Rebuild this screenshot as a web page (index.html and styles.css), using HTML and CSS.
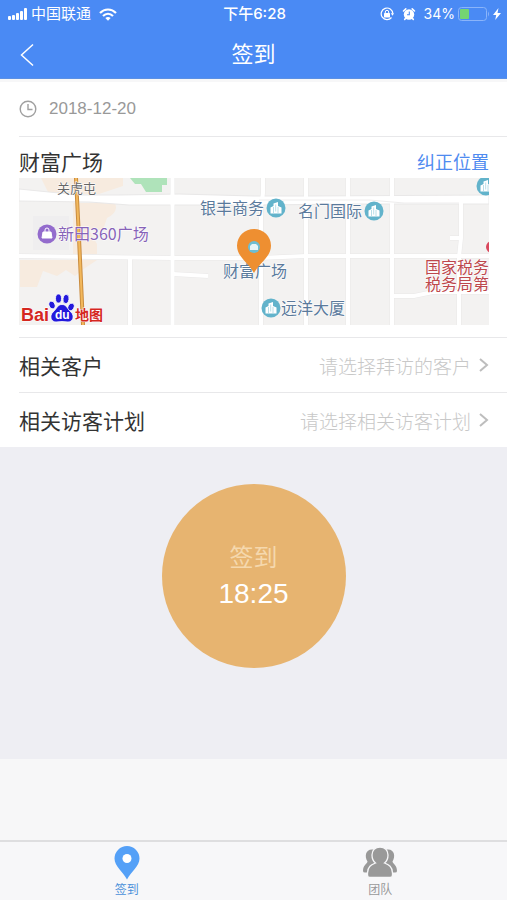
FILE: index.html
```html
<!doctype html>
<html lang="zh-CN">
  <head>
    <meta charset="UTF-8" />
    <meta name="viewport" content="width=device-width, initial-scale=1.0" />
    <title>签到</title>
    <link rel="stylesheet" href="styles.css">
  </head>
  <body>
    <header class="header">
      <div class="status-bar">
        <div class="status-left">
          <svg width="20" height="12" viewBox="0 0 20 12" fill="#fff">
            <rect x="0" y="8" width="3" height="4" rx="1" />
            <rect x="4" y="7" width="3" height="5" rx="1" />
            <rect x="8" y="5" width="3" height="7" rx="1" />
            <rect x="12" y="3" width="3" height="9" rx="1" />
            <rect x="16" y="0" width="3" height="12" rx="1" />
          </svg>
          <span>中国联通</span>
          <svg class="wifi" width="18" height="13" viewBox="0 0 18 13" fill="none" stroke="#fff" stroke-width="2.2">
            <path d="M1 5C5.500 .3 12.500 .3 17 5" />
            <path d="M4 8C7 5 11 5 14 8" />
            <path d="M6.300 10Q9 7.800 11.700 10L9 12.800Z" fill="#fff" stroke="none" />
          </svg>
        </div>
        <div class="status-time">下午6:28</div>
        <div class="status-right">
          <svg width="14" height="14" viewBox="0 0 14 14" fill="none" stroke="#fff">
            <path d="M11.500 10.500A5.800 5.800 0 1 1 12.800 6.500" stroke-width="1.200" />
            <path d="M10.800 6.300h3.200l-1.500 2.400z" fill="#fff" stroke="none" />
            <rect x="4" y="6" width="6" height="4.500" rx=".6" fill="#fff" stroke="none" />
            <path d="M5.300 6.500V5a1.700 1.700 0 0 1 3.400 0v1.500" />
          </svg>
          <svg class="alarm" width="14" height="14" viewBox="0 0 14 14">
            <circle cx="7" cy="7.500" r="5.200" fill="#fff" />
            <path d="M1.500 4 3.800 1.800M12.500 4 10.200 1.800M3.500 11.500l-.8.9M10.500 11.500l.8.9" stroke="#fff" stroke-width="1.600" stroke-linecap="round" />
            <path d="M7.300 4.500v3.300H5" fill="none" stroke="#4a8af4" stroke-width="1.100" />
          </svg>
          <span class="percent">34%</span>
          <svg width="32" height="14" viewBox="0 0 32 14">
            <rect x=".5" y=".5" width="28" height="13" rx="3" fill="none" stroke="#8ab4fa" />
            <rect x="2" y="2" width="9" height="10" rx="1" fill="#74d572" />
            <path d="M30 4.500q2 2.500 0 5z" fill="#8ab4fa" />
          </svg>
          <svg width="8" height="12" viewBox="0 0 8 12" fill="#fff">
            <path d="M5.500 0 0 7h3.200L2.200 12 8 5H4.500z" />
          </svg>
        </div>
      </div>
      <nav class="nav-bar">
        <button class="back" type="button" aria-label="返回">
          <svg width="14" height="24" viewBox="0 0 14 24" fill="none" stroke="#fff" stroke-width="1.500">
            <path d="M13 1.500 1.500 12 13 22.500" />
          </svg>
        </button>
        <h1>签到</h1>
      </nav>
    </header>

    <main class="content">
      <section class="card">
        <div class="row date-row">
          <svg width="18" height="18" viewBox="0 0 18 18" fill="none" stroke="#a0a0a0" stroke-width="1.400">
            <circle cx="9" cy="9" r="7.800" />
            <path d="M9 4v5.500h4.500" />
          </svg>
          <time datetime="2018-12-20">2018-12-20</time>
        </div>

        <div class="place">
          <div class="place-head">
            <h2>财富广场</h2>
            <a class="fix-link" href="#">纠正位置</a>
          </div>
          <svg class="map" viewBox="0 0 470 147">
            <defs>
              <g id="building">
                <circle r="9.500" fill="#62b3cb" />
                <path d="M-5.500 5.500V-.5L-2.500-2V-4.500L2-6V-2L5.500-.5V5.500Z" fill="#fff" />
                <path d="M-2.500-1v6M2-1v6M-.3-3.500v7" stroke="#a5d5e2" stroke-width=".8" />
              </g>
              <g id="roads" fill="none">
                <path d="M153.500 0V147M111 80V147M287 0V147M329 0V147M373 0V147" />
                <path d="M244 0V15L242 30V147" />
                <path d="M442 25V60L440 79V147M431 60H442" />
                <path d="M0 78 153 80H240L287 78H470M154 96 189 98" />
                <path d="M374 118H395L414 114H470" />
              </g>
            </defs>
            <rect width="470" height="147" fill="#f3f2f1" />
            <g fill="#f7ebdf">
              <path d="M22 0H104V8L80 16H30Z" />
              <path d="M54 25H96Q100 34 88 40L84 52H70L78 66V76H54Z" />
              <path d="M1 82H78L66 90 56 98 47 92 38 98 24 93 18 109H1Z" />
            </g>
            <path d="M14 38H50V72H14Z" fill="#efeeef" />
            <path d="M111 0H148V7H143V14H127L122 6H116Z" fill="#afe3ba" />
            <use href="#roads" stroke="#e9e8e8" stroke-width="5" />
            <path d="M0 11 60 17 100 17 160 16 235 18H290L470 17V26H330L240 27 110 27 70 24 0 23Z" fill="#fff" stroke="#e9e8e8" />
            <use href="#roads" stroke="#fff" stroke-width="4" />
            <path d="M240 22H350L385 25H440" fill="none" stroke="#eeeded" />
            <path d="M57 0 60 60 64 147" fill="none" stroke="#c98b3d" stroke-width="4" />
            <path d="M57 0 60 60 64 147" fill="none" stroke="#f2b85c" stroke-width="2" />

            <text class="map-area" x="38" y="15">关虎屯</text>
            <g class="map-label">
              <text x="181" y="36">银丰商务</text>
              <text x="279" y="39">名门国际</text>
              <text x="204" y="99">财富广场</text>
              <text x="262" y="136">远洋大厦</text>
            </g>
            <use href="#building" x="257" y="30" />
            <use href="#building" x="355" y="33" />
            <use href="#building" x="252" y="130" />
            <use href="#building" x="467" y="8" />

            <circle cx="28" cy="56" r="9.500" fill="#936bcd" />
            <path d="M24 54h8l1 6H23z" fill="#fff" stroke="#fff" />
            <path d="M26 54v-2a2 2 0 0 1 4 0v2" fill="none" stroke="#fff" />
            <text class="map-mall" x="39" y="62">新田360广场</text>

            <circle cx="473" cy="69" r="6" fill="#d9485d" />
            <g class="map-office">
              <text x="406" y="95">国家税务</text>
              <text x="406" y="112">税务局第</text>
            </g>

            <path d="M235 95C229 84 218 79 218 67.500A17 16.500 0 0 1 252 67.500C252 79 241 84 235 95Z" fill="#ee8f31" />
            <circle cx="235" cy="69" r="6" fill="#6ebdd2" />
            <path d="M231 72v-4l2-2h4l2 2v4z" fill="#e7f5f8" />

            <g fill="#2319dc" stroke="#fff" stroke-width=".8">
              <ellipse cx="33" cy="127" rx="3" ry="4" transform="rotate(-20 33 127)" />
              <ellipse cx="39.500" cy="120.500" rx="3" ry="4.500" />
              <ellipse cx="47" cy="121" rx="3" ry="4.500" transform="rotate(10 47 121)" />
              <ellipse cx="52" cy="129" rx="3" ry="4" transform="rotate(25 52 129)" />
              <path d="M43 126.500C38 126.500 38 131 34 134C30 138 32 144 37 144Q43 143 49 144C54 144 56 138 52 134C48 131 48 126.500 43 126.500Z" />
            </g>
            <text class="baidu-du" x="36" y="141">du</text>
            <text class="baidu-name" x="2" y="143">Bai</text>
            <text class="baidu-map" x="56" y="142">地图</text>
          </svg>
        </div>

        <div class="row">
          <span class="row-title" id="customer-label">相关客户</span>
          <button class="picker" type="button" aria-describedby="customer-label">
            请选择拜访的客户
            <svg width="10" height="16" viewBox="0 0 10 16" fill="none" stroke="#bdbdbd" stroke-width="2">
              <path d="M1 2 8 8 1 14" />
            </svg>
          </button>
        </div>
        <div class="row">
          <span class="row-title" id="plan-label">相关访客计划</span>
          <button class="picker" type="button" aria-describedby="plan-label">
            请选择相关访客计划
            <svg width="10" height="16" viewBox="0 0 10 16" fill="none" stroke="#bdbdbd" stroke-width="2">
              <path d="M1 2 8 8 1 14" />
            </svg>
          </button>
        </div>
      </section>

      <section class="check-in">
        <button class="check-btn" type="button">
          <span class="check-text">签到</span>
          <span class="check-time">18:25</span>
        </button>
      </section>
    </main>

    <nav class="tab-bar">
      <a class="tab active" href="#">
        <svg width="26" height="34" viewBox="0 0 26 34">
          <path d="M13 33.500C9 26 .5 20 .5 12.500A12.500 12.500 0 0 1 25.500 12.500C25.500 20 17 26 13 33.500Z" fill="#54a0f7" />
          <circle cx="13" cy="12.500" r="4.500" fill="#fff" />
        </svg>
        <span>签到</span>
      </a>
      <a class="tab" href="#">
        <svg width="34" height="34" viewBox="0 0 34 34" fill="#999">
          <path d="M10 3.500C3 2.500 1 10 4.500 15.500C4 18 0 19 0 25Q0 26.500 2 26.500H8L14 15V4Z" />
          <path d="M24 3.500C31 2.500 33 10 29.500 15.500C30 18 34 19 34 25Q34 26.500 32 26.500H26L20 15V4Z" />
          <path d="M17 1C12 1 9 4.500 9 9C9 12.500 10.500 15.500 12.500 17C9 18.500 4.500 20 4.500 27V29Q4.500 31.500 7 31.500H27Q29.500 31.500 29.500 29V27C29.500 20 25 18.500 21.500 17C23.500 15.500 25 12.500 25 9C25 4.500 22 1 17 1Z" stroke="#f7f7f9" stroke-width="1.300" />
        </svg>
        <span>团队</span>
      </a>
    </nav>
  </body>
</html>
```

FILE: styles.css
```css
* {
  box-sizing: border-box;
}

body {
  margin: 0;
  min-height: 100vh;
  display: flex;
  flex-direction: column;
  font-family: "Liberation Sans", "Noto Sans CJK SC", sans-serif;
  color: #333;
  background: #f7f7f8;
}

button {
  border: 0;
  padding: 0;
  background: none;
  font-family: inherit;
  cursor: pointer;
}

a {
  text-decoration: none;
}

svg {
  display: block;
  flex-shrink: 0;
}

.header {
  background: #4a8af4;
  color: #fff;
  border-bottom: 1px solid #5b90e4;
}

.status-bar {
  display: grid;
  grid-template-columns: 1fr auto 1fr;
  align-items: center;
  height: 28px;
  padding: 0 6px 0 8px;
  font-family: "Inter", "Noto Sans CJK SC", sans-serif;
  font-size: 15px;
  line-height: 20px;
}

.status-left,
.status-right {
  display: flex;
  align-items: center;
  gap: 3px;
}

.wifi,
.alarm,
.percent {
  margin-left: 5px;
}

.status-time {
  font-weight: 500;
}

.status-right {
  justify-content: flex-end;
  font-size: 14px;
}

.nav-bar {
  display: grid;
  grid-template-columns: 1fr auto 1fr;
  align-items: center;
  height: 50px;
  padding: 3px 20px 0;
}

.nav-bar h1 {
  margin: 0;
  font-size: 22px;
  font-weight: 400;
  line-height: 32px;
}

.back {
  justify-self: start;
}

.content {
  flex: 1;
}

.card {
  margin-top: 3px;
  padding-left: 19px;
  background: #fff;
}

.row {
  display: flex;
  align-items: center;
  justify-content: space-between;
  height: 55px;
  padding-right: 18px;
  border-bottom: 1px solid #e8e8ea;
}

.row:last-child {
  height: 54px;
  border-bottom: 0;
}

.date-row {
  justify-content: flex-start;
  gap: 12px;
  color: #999;
  font-size: 17px;
}

.place {
  padding: 11px 18px 12px 0;
  border-bottom: 1px solid #e8e8ea;
}

.place-head {
  display: flex;
  align-items: center;
  justify-content: space-between;
  line-height: 30px;
}

.place-head h2 {
  margin: 0;
  font-size: 21px;
  font-weight: 400;
}

.fix-link {
  color: #4f8bf0;
  font-size: 18px;
}

.map {
  width: 100%;
  font-family: "Noto Sans CJK SC", sans-serif;
  font-size: 16px;
}

.map text {
  paint-order: stroke;
  stroke: #fff;
  stroke-width: 1px;
}

.map-area {
  font-size: 13px;
  fill: #666;
}

.map-label {
  fill: #5a7a9c;
}

.map-mall {
  fill: #8763b8;
}

.map-office {
  fill: #bd474c;
}

.map .baidu-name,
.map .baidu-map {
  font-weight: 700;
  fill: #d5271f;
}

.map .baidu-name {
  font-family: "Liberation Sans", sans-serif;
  font-size: 18px;
}

.map .baidu-map {
  font-size: 14px;
}

.map .baidu-du {
  font-family: "Liberation Sans", sans-serif;
  font-size: 12px;
  font-weight: 700;
  fill: #fff;
  stroke: none;
}

.row-title {
  font-size: 21px;
}

.picker {
  display: flex;
  align-items: center;
  gap: 8px;
  color: #c8c8c8;
  font-size: 19px;
  font-weight: 300;
}

.check-in {
  display: flex;
  justify-content: center;
  padding: 37px 0 91px;
  background: #eeeef3;
}

.check-btn {
  display: flex;
  flex-direction: column;
  align-items: center;
  justify-content: center;
  width: 184px;
  height: 184px;
  border-radius: 50%;
  background: #e7b470;
  color: #fff;
}

.check-text {
  color: #f5d8ad;
  font-size: 24px;
  line-height: 36px;
}

.check-time {
  font-size: 28px;
  line-height: 36px;
}

.tab-bar {
  display: flex;
  border-top: 2px solid #dedee0;
  background: #f7f7f9;
}

.tab {
  flex: 1;
  display: flex;
  flex-direction: column;
  align-items: center;
  padding-top: 4px;
  color: #999;
  font-size: 12px;
  line-height: 20px;
}

.tab.active {
  color: #4a90d9;
}
```
